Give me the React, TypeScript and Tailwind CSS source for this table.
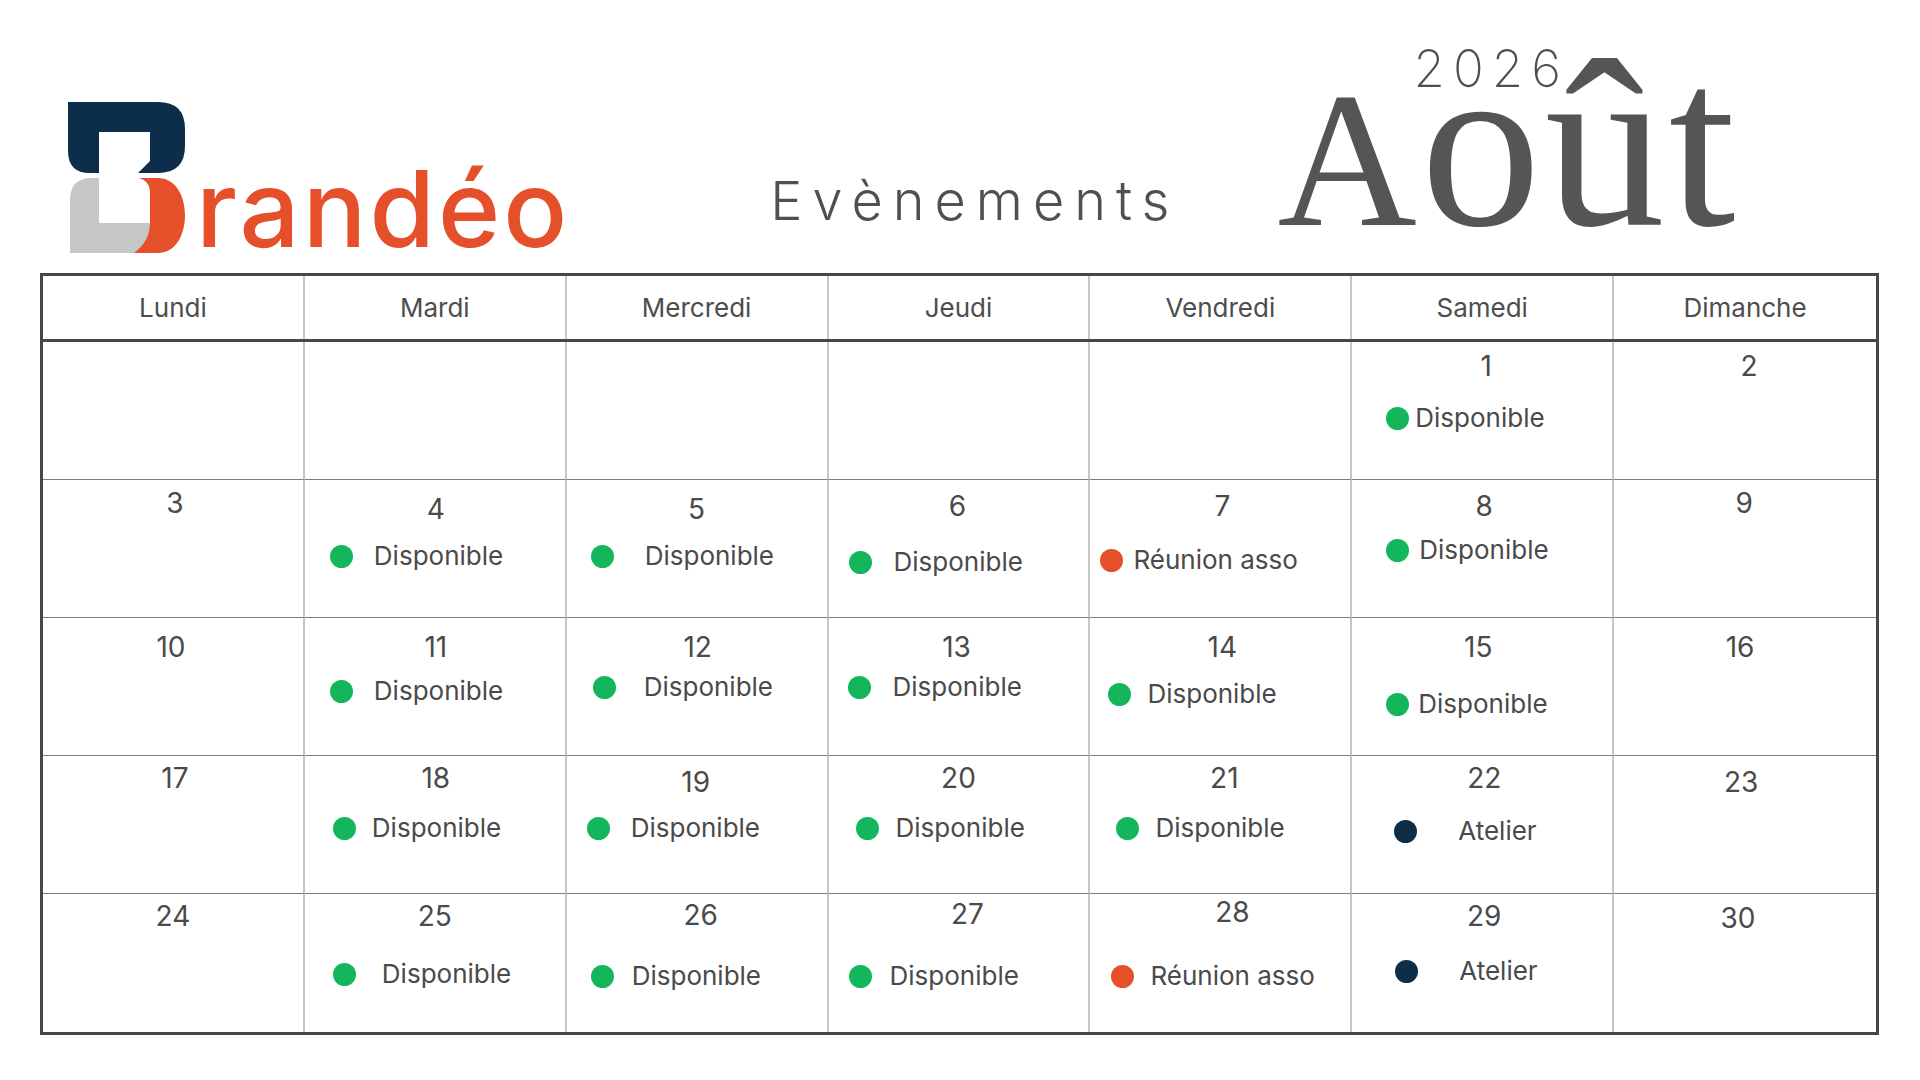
import React from "react";

type Ev = "g" | "o" | "n";
type Cell = {
  day?: number;
  dx?: number;
  ny?: number;
  ev?: Ev;
  ex?: number;
  ey?: number;
  gap?: number;
};

const E = (): Cell => ({});
const C = (
  day: number,
  dx: number,
  ny: number,
  ev?: Ev,
  ex?: number,
  ey?: number,
  gap?: number
): Cell => ({ day, dx, ny, ev, ex, ey, gap });

const rows: Cell[][] = [
  [E(), E(), E(), E(), E(), C(1, 4, 24, "g", 45, 76, 18), C(2, 4, 24)],
  [
    C(3, 2, 23),
    C(4, 1, 29, "g", 37, 76, 32),
    C(5, 0, 29, "g", 36, 76, 42),
    C(6, -1, 26, "g", 32, 82, 33),
    C(7, 2, 26, "o", 21, 80, 22),
    C(8, 2, 26, "g", 45, 70, 22),
    C(9, -1, 23),
  ],
  [
    C(10, -2, 29),
    C(11, 1, 29, "g", 37, 73, 32),
    C(12, 1, 29, "g", 38, 69, 39),
    C(13, -2, 29, "g", 31, 69, 33),
    C(14, 2, 29, "g", 29, 76, 28),
    C(15, -4, 29, "g", 45, 86, 21),
    C(16, -5, 29),
  ],
  [
    C(17, 2, 22),
    C(18, 1, 22, "g", 40, 72, 27),
    C(19, -1, 26, "g", 32, 72, 32),
    C(20, 0, 22, "g", 39, 72, 28),
    C(21, 4, 22, "g", 37, 72, 28),
    C(22, 2, 22, "n", 53, 75, 53),
    C(23, -4, 26),
  ],
  [
    C(24, 0, 22),
    C(25, 0, 22, "g", 40, 80, 37),
    C(26, 4, 21, "g", 36, 82, 29),
    C(27, 9, 20, "g", 32, 82, 29),
    C(28, 12, 18, "o", 32, 82, 28),
    C(29, 2, 22, "n", 54, 77, 53),
    C(30, -7, 24),
  ],
];

const days = ["Lundi", "Mardi", "Mercredi", "Jeudi", "Vendredi", "Samedi", "Dimanche"];

const evLabel: Record<Ev, string> = {
  g: "Disponible",
  o: "Réunion asso",
  n: "Atelier",
};

function Dot({ ev }: { ev: Ev }) {
  const cls =
    ev === "g" ? "bg-[#14b65c]" : ev === "o" ? "bg-[#e5502a]" : "bg-[#0e2d47]";
  return <span className={`block w-[23px] h-[23px] rounded-full shrink-0 ${cls}`} />;
}

function DayCell({ cell, lastCol, lastRow }: { cell: Cell; lastCol: boolean; lastRow: boolean }) {
  const border = `${lastCol ? "" : "border-r-2 border-r-[#c6c6c6]"} ${lastRow ? "" : "border-b border-b-[#7d7d7d]"}`;
  if (cell.day === undefined) {
    return <div className={`${border}`} />;
  }
  const dx = cell.dx ?? 0;
  const ny = cell.ny ?? 24;
  const numTop = ny - 14;
  return (
    <div className={`flex flex-col ${border}`}>
      <div
        className="text-center text-[28px] leading-[28px] text-[#4a4a4a]"
        style={{
          marginTop: numTop,
          paddingLeft: dx > 0 ? dx * 2 : 0,
          paddingRight: dx < 0 ? -dx * 2 : 0,
        }}
      >
        {cell.day}
      </div>
      {cell.ev && (
        <div
          className="flex items-center h-[26px]"
          style={{
            marginTop: (cell.ey ?? 76) - 13 - (numTop + 28),
            paddingLeft: (cell.ex ?? 36) - 11.5,
            gap: (cell.gap ?? 30) - 11.5,
          }}
        >
          <Dot ev={cell.ev} />
          <span className="text-[26px] leading-[26px] text-[#4a4a4a] whitespace-nowrap">
            {evLabel[cell.ev]}
          </span>
        </div>
      )}
    </div>
  );
}

function Logo() {
  return (
    <div className="flex items-end">
      <svg width="118" height="153" viewBox="68 101 118 153" className="block">
        <path
          d="M68 102 H158 Q185 102 185 129 V146 Q185 173 158 173 H138 L150 161 V132 H99 V173 H90 Q68 173 68 151 Z"
          fill="#0c2e4a"
        />
        <path d="M70 200 Q70 178 92 178 H99 V223 H150 V253 H70 Z" fill="#c5c6c8" />
        <path
          d="M139 178 H158 C175 178 185 195 185 215 C185 236 175 253 158 253 H134 C145 245 150 235 150 222 V192 C150 185 146 180 139 178 Z"
          fill="#e5502a"
        />
      </svg>
      <span
        className="ml-[10px] mb-[-1px] text-[106px] leading-[92px] font-medium text-[#e5502a] tracking-[3px]"
        style={{ fontFamily: "Inter, 'Noto Sans', sans-serif" }}
      >
        randéo
      </span>
    </div>
  );
}

export default function App() {
  return (
    <div
      className="w-[1920px] h-[1080px] bg-white overflow-hidden"
      style={{ fontFamily: "Inter, 'Open Sans', 'Noto Sans', sans-serif" }}
    >
      {/* Top header */}
      <div className="flex h-[273px]">
        <div className="ml-[68px] mt-[101px]">
          <Logo />
        </div>
        <div className="ml-[200px] mt-[174px] text-[54px] leading-[54px] font-light tracking-[10px] text-[#505050]">
          Evènements
        </div>
        <div className="ml-[98px] flex flex-col">
          <div className="ml-[136px] mt-[43px] text-[51px] leading-[51px] font-extralight tracking-[8px] text-[#4f4f4f]">
            2026
          </div>
          <div
            className="mt-[-70px] text-[240px] leading-[240px] text-[#555555] whitespace-nowrap"
            style={{ fontFamily: "'Liberation Serif', 'DejaVu Serif', serif" }}
          >
            <span className="text-[193px] tracking-[4px]">A</span>
            <span className="tracking-[4px]">oût</span>
          </div>
        </div>
      </div>

      {/* Calendar table */}
      <div className="ml-[40px] w-[1839px] h-[762px] border-[3px] border-[#474747] flex flex-col">
        <div className="grid grid-cols-7 h-[66px] border-b-[3px] border-b-[#474747]">
          {days.map((d, i) => (
            <div
              key={d}
              className={`flex items-center justify-center text-[26px] text-[#4d4d4d] ${
                i < 6 ? "border-r-2 border-r-[#c6c6c6]" : ""
              }`}
            >
              {d}
            </div>
          ))}
        </div>
        <div className="grid grid-cols-7 grid-rows-5 flex-1">
          {rows.map((r, ri) =>
            r.map((c, ci) => (
              <DayCell key={`${ri}-${ci}`} cell={c} lastCol={ci === 6} lastRow={ri === 4} />
            ))
          )}
        </div>
      </div>
    </div>
  );
}
